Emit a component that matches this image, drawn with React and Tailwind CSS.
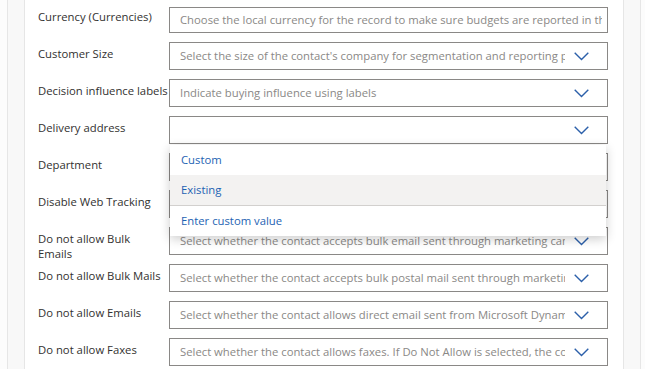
const rows = [
    { label: 'Currency (Currencies)', text: 'Choose the local currency for the record to make sure budgets are reported in the correct currency.', chevron: false },
    { label: 'Customer Size', text: "Select the size of the contact's company for segmentation and reporting purposes.", chevron: true },
    { label: 'Decision influence labels', text: 'Indicate buying influence using labels', chevron: true },
    { label: 'Delivery address', text: '', chevron: true, open: true },
    { label: 'Department', text: '', chevron: true },
    { label: 'Disable Web Tracking', text: '', chevron: true },
    { label: ['Do not allow Bulk', 'Emails'], text: 'Select whether the contact accepts bulk email sent through marketing campaigns.', chevron: true },
    { label: 'Do not allow Bulk Mails', text: 'Select whether the contact accepts bulk postal mail sent through marketing campaigns.', chevron: true },
    { label: 'Do not allow Emails', text: 'Select whether the contact allows direct email sent from Microsoft Dynamics 365.', chevron: true },
    { label: 'Do not allow Faxes', text: 'Select whether the contact allows faxes. If Do Not Allow is selected, the contact will be excluded.', chevron: true },
];

const options = ['Custom', 'Existing'];

function Chevron() {
    return (
        <svg className="w-[15px] h-[9px] shrink-0 ml-[9px] mr-[18px]" viewBox="0 0 15 9" fill="none">
            <path d="M0.7 0.8 L7.5 7.6 L14.3 0.8" stroke="#2c60aa" strokeWidth="1.4" />
        </svg>
    );
}

function Field({ row, first }) {
    return (
        <div className="flex h-[28px] mb-[9px]">
            <div className="w-[131px] shrink-0 pt-[4px] whitespace-nowrap text-[11.3px] leading-[15px] text-[#323130]">
                {Array.isArray(row.label) ? row.label.map((l) => <div key={l}>{l}</div>) : row.label}
            </div>
            <div className="relative flex-1 min-w-0">
                <div
                    className={`flex items-center border border-[#8a8886] bg-white pl-[10px] ${first ? 'h-[26px] mt-[2px]' : 'h-[28px]'} ${row.chevron ? '' : 'pr-[5px]'}`}
                >
                    <span className="flex-1 min-w-0 overflow-hidden whitespace-nowrap text-[11.3px] text-[#8a8886]">{row.text}</span>
                    {row.chevron && <Chevron />}
                </div>
                {row.open && (
                    <div className="absolute left-[1px] top-[29px] z-10 w-[436px] bg-white shadow-[0_3px_10px_rgba(0,0,0,0.2)] text-[11.3px] text-[#1d63b3]">
                        {options.map((o, i) => (
                            <div key={o} className={`h-[30px] flex items-center pl-[11px] ${i === 1 ? 'bg-[#f3f2f1]' : ''}`}>
                                {o}
                            </div>
                        ))}
                        <div className="h-[31px] flex items-center pl-[11px] border-t border-[#d2d0ce]">Enter custom value</div>
                    </div>
                )}
            </div>
        </div>
    );
}

export default function App() {
    return (
        <div className="w-[645px] h-[369px] overflow-hidden flex bg-white" style={{ fontFamily: '"Open Sans", "Noto Sans", sans-serif' }}>
            <div className="w-[7px] shrink-0 bg-[#fcfcfc]" />
            <div className="w-[18px] shrink-0 bg-[#f8f8f8] border-l border-[#e6e6e6] border-r border-[#d6d6d6]" />
            <div className="flex-1 min-w-0 pl-[13px] pr-[15px] pt-[5px]">
                {rows.map((r, i) => (
                    <Field key={i} row={r} first={i === 0} />
                ))}
            </div>
            <div className="w-[18px] shrink-0 bg-[#f8f8f8] border-l border-[#d6d6d6] border-r border-[#e6e6e6]" />
            <div className="w-[4px] shrink-0 bg-[#fcfcfc]" />
        </div>
    );
}
